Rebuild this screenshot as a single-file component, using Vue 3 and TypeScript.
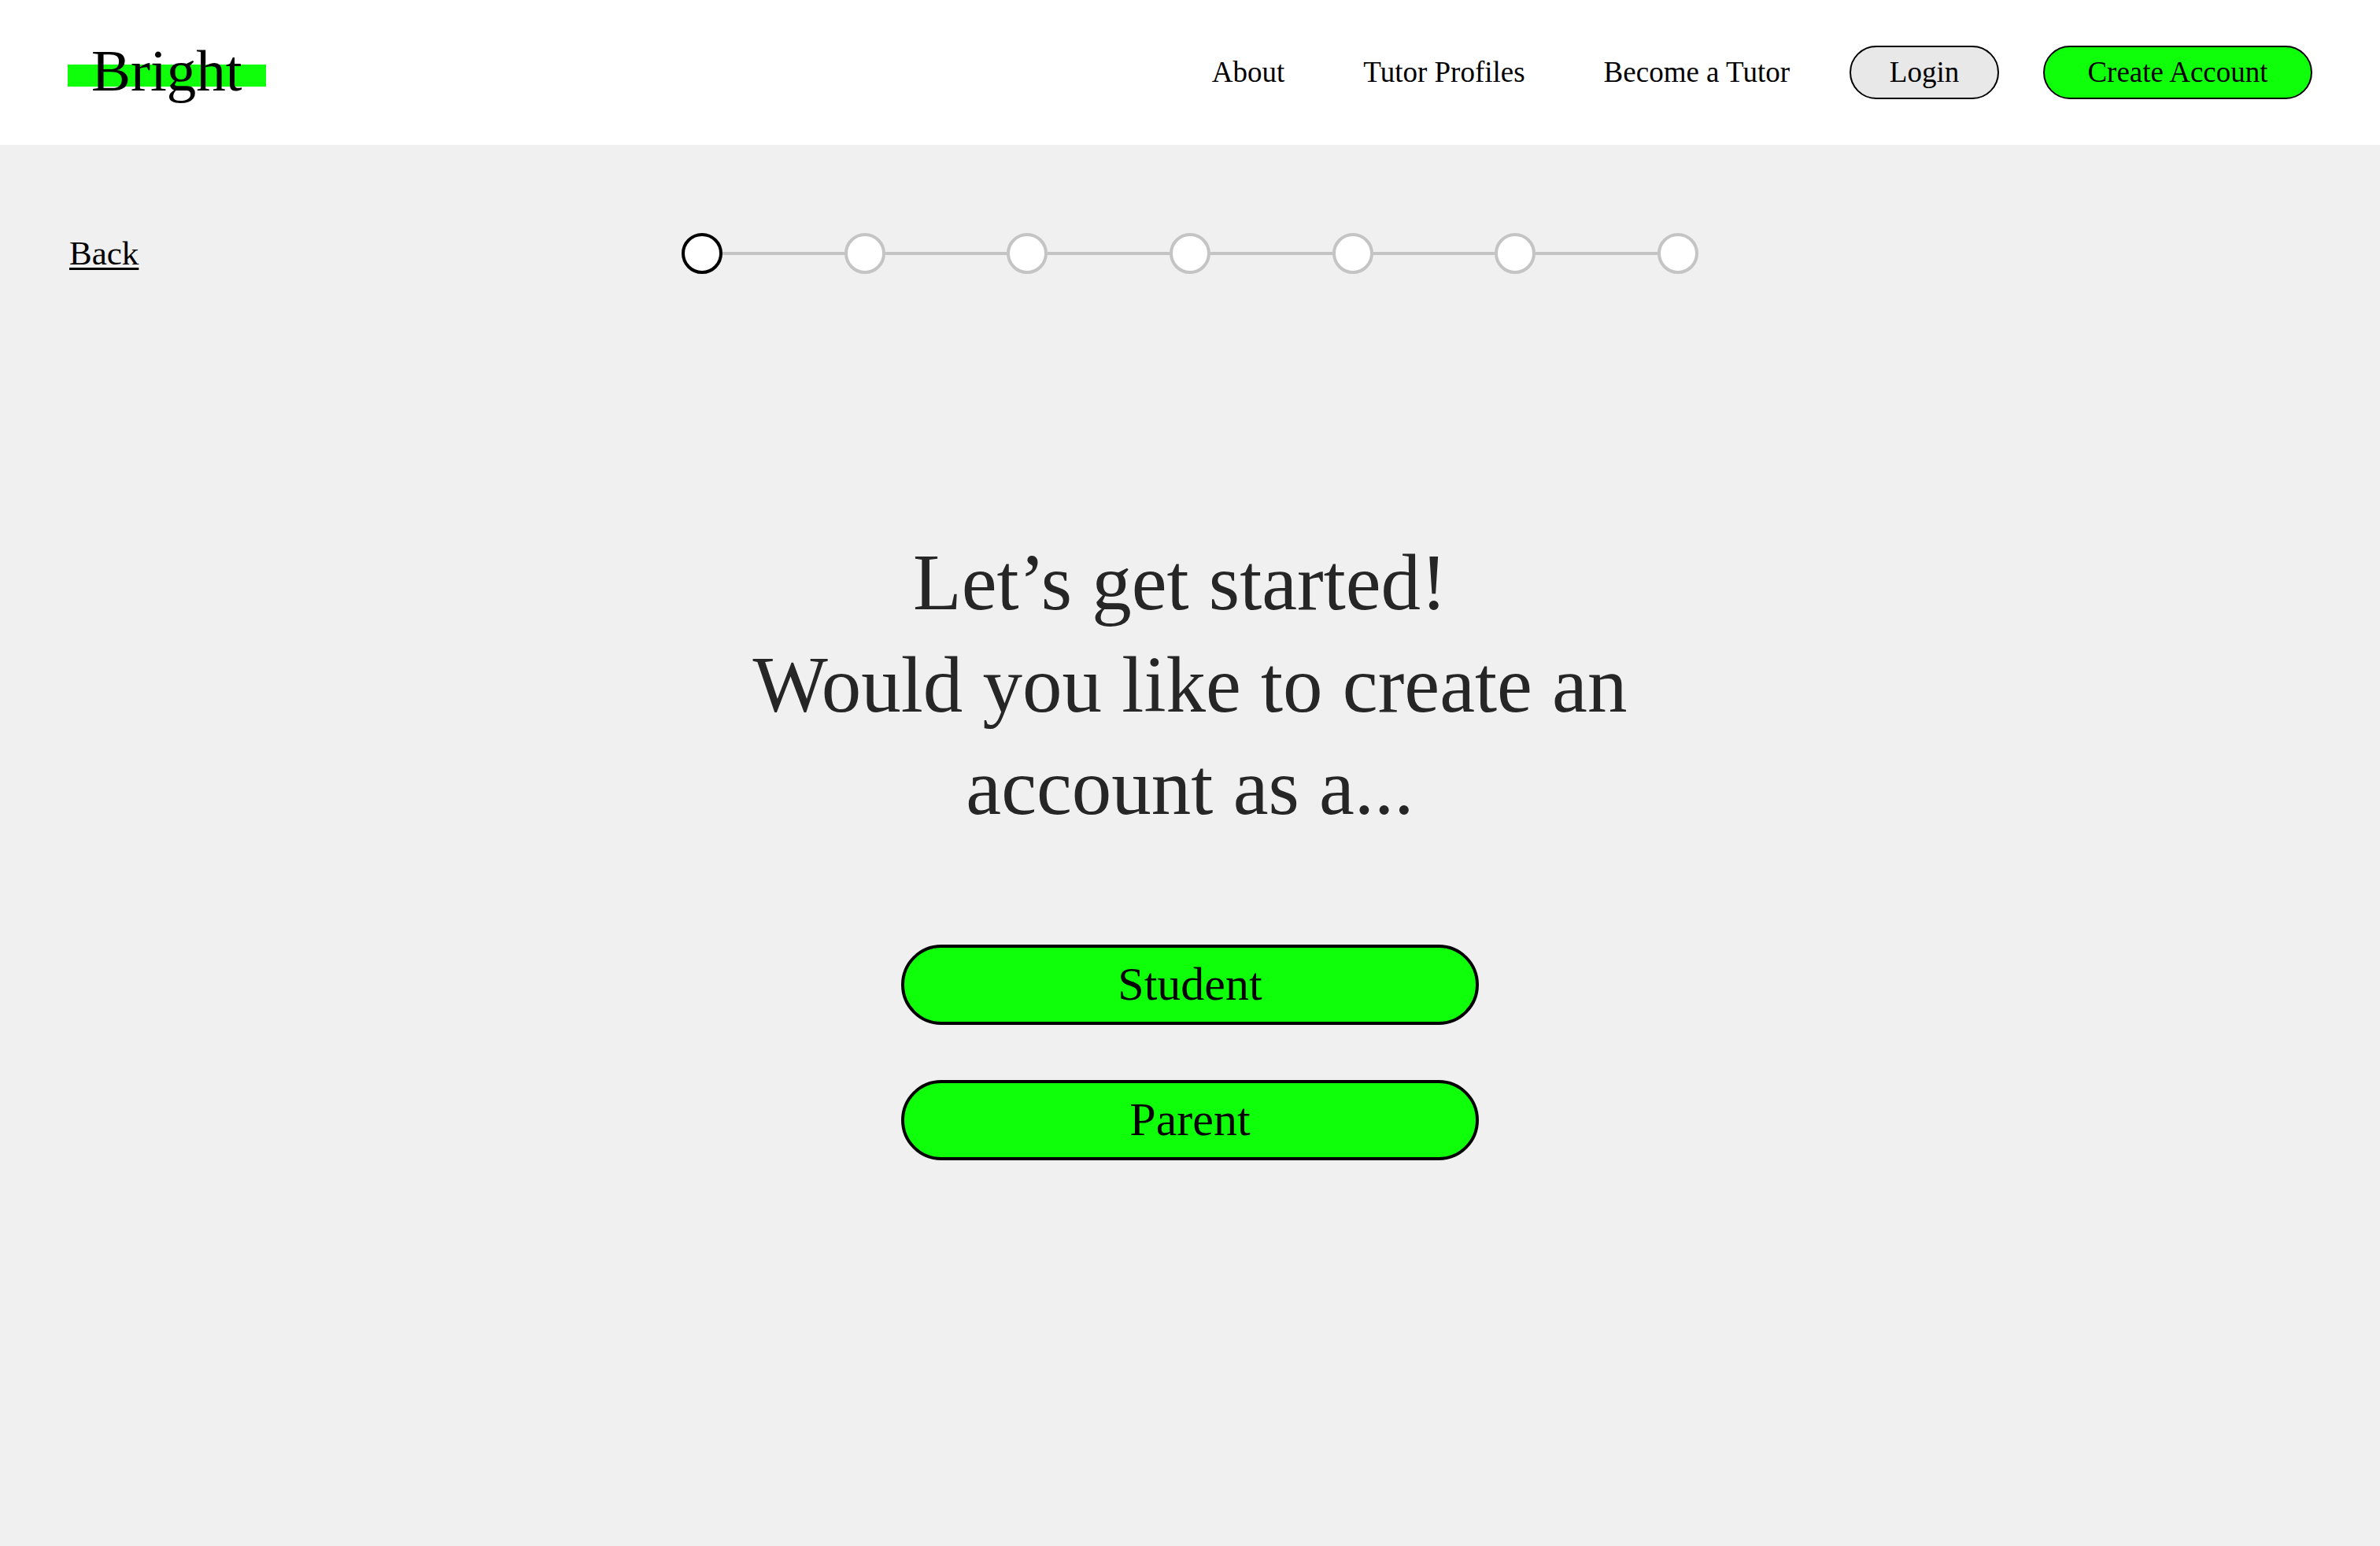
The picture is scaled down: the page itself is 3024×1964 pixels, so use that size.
<script setup lang="ts">
import { ref } from 'vue'

interface NavLink {
  label: string
  href: string
}

const navLinks: NavLink[] = [
  { label: 'About', href: '#about' },
  { label: 'Tutor Profiles', href: '#tutors' },
  { label: 'Become a Tutor', href: '#become-a-tutor' },
]

const stepCount = 7
const currentStep = ref<number>(1)

const roles: string[] = ['Student', 'Parent']
</script>

<template>
  <div class="page">
    <header class="header">
      <a class="logo" href="#home">Bright</a>
      <div class="menu">
        <nav class="nav">
          <a v-for="link in navLinks" :key="link.href" class="nav-link" :href="link.href">{{ link.label }}</a>
        </nav>
        <div class="actions">
          <button type="button" class="pill login">Login</button>
          <button type="button" class="pill create">Create Account</button>
        </div>
      </div>
    </header>

    <div class="progress">
      <a class="back" href="#back">Back</a>
      <ol class="steps">
        <li
          v-for="step in stepCount"
          :key="step"
          class="step"
          :class="{ current: step === currentStep }"
          :aria-current="step === currentStep ? 'step' : undefined"
        >
          <span class="dot"></span>
        </li>
      </ol>
    </div>

    <main class="content">
      <h1 class="title">
        Let’s get started!&nbsp;<br />
        Would you like to create an<br />
        account as a...
      </h1>
      <div class="choices">
        <button v-for="role in roles" :key="role" type="button" class="choice">{{ role }}</button>
      </div>
    </main>
  </div>
</template>

<style>
body {
  margin: 0;
  background: #f0f0f0;
}
</style>

<style scoped>
.page {
  min-height: 100vh;
  background: #f0f0f0;
  color: #000;
  font-family: 'Liberation Serif', 'Times New Roman', serif;
}

.header {
  display: flex;
  align-items: center;
  justify-content: space-between;
  box-sizing: border-box;
  min-height: 184px;
  padding: 0 86px;
  background: #fff;
}

/* Highlighter stroke behind the wordmark */
.logo {
  padding: 0 30px 4px;
  background: linear-gradient(#0fff0b, #0fff0b) 0 22px / 100% 28px no-repeat;
  color: #000;
  font-size: 75px;
  line-height: 60px;
  text-decoration: none;
}

.menu {
  display: flex;
  align-items: center;
  gap: 76px;
}

.nav {
  display: flex;
  gap: 100px;
}

.nav-link {
  color: #000;
  font-size: 37px;
  line-height: 44px;
  text-decoration: none;
}

.actions {
  display: flex;
  gap: 56px;
}

.pill {
  box-sizing: border-box;
  height: 68px;
  padding: 0;
  border: 2px solid #000;
  border-radius: 34px;
  color: #000;
  font-family: inherit;
  font-size: 37px;
  line-height: 44px;
}

.login {
  width: 190px;
  background: #e8e8e8;
}

.create {
  width: 342px;
  background: #0fff0b;
}

.progress {
  display: grid;
  grid-template-columns: 1fr minmax(0, 1292px) 1fr;
  align-items: center;
  padding: 112px 88px 0;
}

.back {
  justify-self: start;
  color: #000;
  font-size: 43px;
  line-height: 52px;
  text-decoration-thickness: 3px;
  text-underline-offset: 4px;
}

.steps {
  display: flex;
  margin: 0;
  padding: 0;
  list-style: none;
}

.step {
  display: flex;
  flex: 1;
  align-items: center;
}

.step:last-child {
  flex: none;
}

.step:not(:last-child)::after {
  content: '';
  flex: 1;
  height: 4px;
  background: #c4c4c4;
}

.dot {
  box-sizing: border-box;
  width: 52px;
  height: 52px;
  border: 4px solid #c4c4c4;
  border-radius: 50%;
  background: #fff;
}

.current .dot {
  border-color: #000;
}

.content {
  display: flex;
  flex-direction: column;
  align-items: center;
  padding: 327px 88px 88px;
}

.title {
  margin: 0;
  color: #262626;
  font-size: 101px;
  font-weight: 400;
  line-height: 130px;
  text-align: center;
}

.choices {
  display: flex;
  flex-direction: column;
  gap: 70px;
  width: 100%;
  max-width: 734px;
  margin-top: 135px;
}

.choice {
  box-sizing: border-box;
  height: 102px;
  padding: 0 0 2px;
  border: 4px solid #000;
  border-radius: 51px;
  background: #0fff0b;
  color: #000;
  font-family: inherit;
  font-size: 60px;
  line-height: 72px;
}
</style>
